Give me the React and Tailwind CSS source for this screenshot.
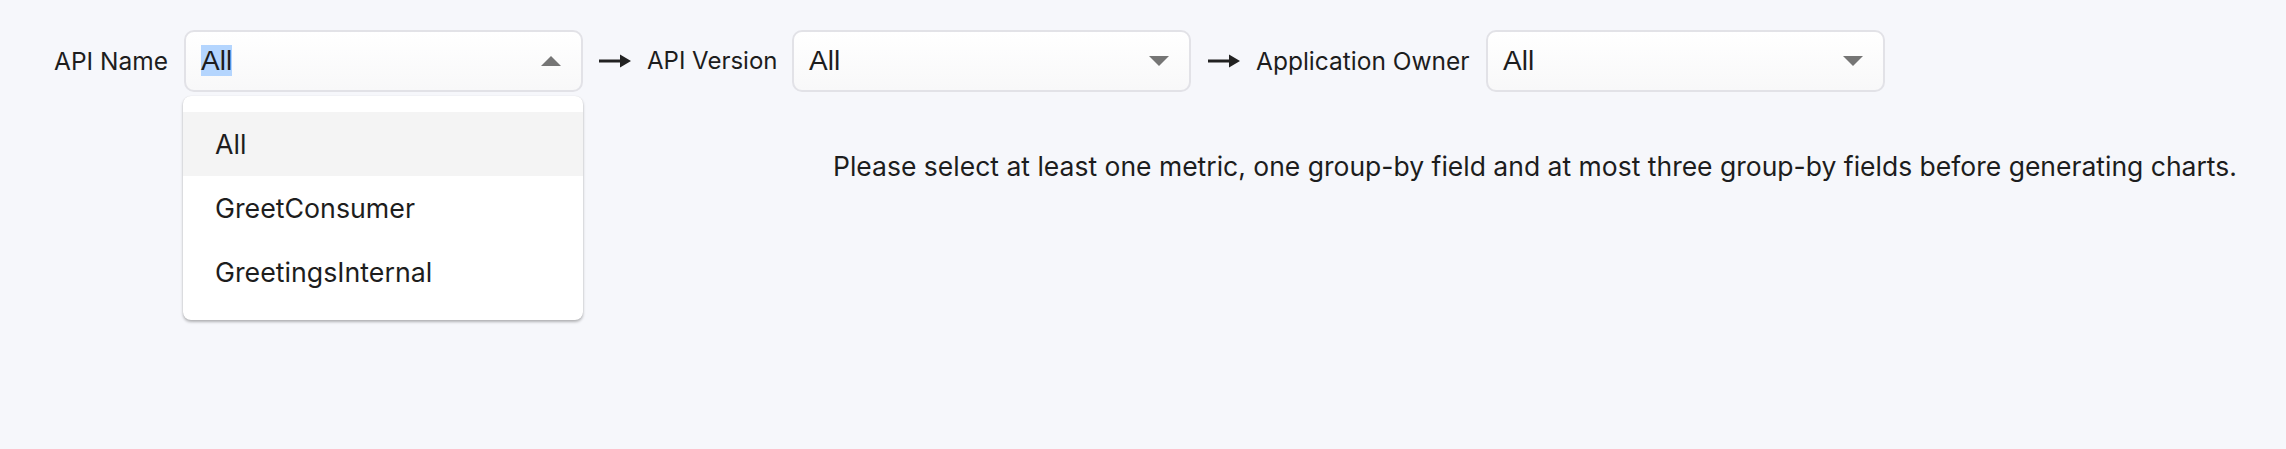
import React from 'react';

const labelFont = "font-['Inter',sans-serif]";

function Arrow() {
  return (
    <svg width="32" height="14" viewBox="0 0 32 14" className="shrink-0">
      <rect x="0" y="5.5" width="22" height="3" fill="#222" />
      <polygon points="21,0.5 32,7 21,13.5" fill="#222" />
    </svg>
  );
}

function Caret({ up }) {
  return (
    <svg width="20" height="10" viewBox="0 0 20 10" className="shrink-0">
      {up ? <polygon points="0,10 20,10 10,0" fill="#757575" /> : <polygon points="0,0 20,0 10,10" fill="#757575" />}
    </svg>
  );
}

function Select({ open, className = '' }) {
  return (
    <div
      className={`flex items-center justify-between w-[399px] h-[62px] pl-[15px] pr-[20px] rounded-[10px] border-2 border-[#e2e2e7] bg-gradient-to-b from-white to-[#f8f8f9] ${className}`}
    >
      <span className="font-['Liberation_Sans',sans-serif] text-[28px] leading-[32px] text-[#1d1d1d]">
        {open ? <span className="bg-[#b4d5fe]">All</span> : 'All'}
      </span>
      <Caret up={open} />
    </div>
  );
}

function Menu() {
  const items = ['All', 'GreetConsumer', 'GreetingsInternal'];
  return (
    <div className="absolute left-[-1px] top-[66px] w-[400px] py-[16px] bg-white rounded-[8px] shadow-[0_2px_3px_rgba(0,0,0,0.28),0_0_1px_rgba(0,0,0,0.12)] z-10">
      {items.map((item, i) => (
        <div
          key={item}
          className={`h-[64px] flex items-center pl-[32px] ${labelFont} text-[26.75px] text-[#1d1d1d] ${i === 0 ? 'bg-[#f4f4f4]' : ''}`}
        >
          {item}
        </div>
      ))}
    </div>
  );
}

export default function App() {
  return (
    <div className="w-full min-h-[449px] bg-[#f6f7fb] text-[#1d1d1d]">
      <div className="flex items-center pl-[54px] pt-[30px]">
        <span className={`${labelFont} text-[24.5px] leading-[30px] w-[112px] whitespace-nowrap`}>API Name</span>
        <div className="relative ml-[18px]">
          <Select open />
          <Menu />
        </div>
        <div className="ml-[16px]"><Arrow /></div>
        <span className={`${labelFont} text-[24px] leading-[30px] ml-[16px] w-[126px] whitespace-nowrap`}>API Version</span>
        <Select className="ml-[19px]" />
        <div className="ml-[17px]"><Arrow /></div>
        <span className={`${labelFont} text-[24.5px] leading-[30px] ml-[16px] w-[212px] whitespace-nowrap`}>Application Owner</span>
        <Select className="ml-[18px]" />
      </div>
      <p className={`${labelFont} text-[26.5px] leading-[30px] ml-[833px] mt-[59px]`}>
        Please select at least one metric, one group-by field and at most three group-by fields before generating charts.
      </p>
    </div>
  );
}
